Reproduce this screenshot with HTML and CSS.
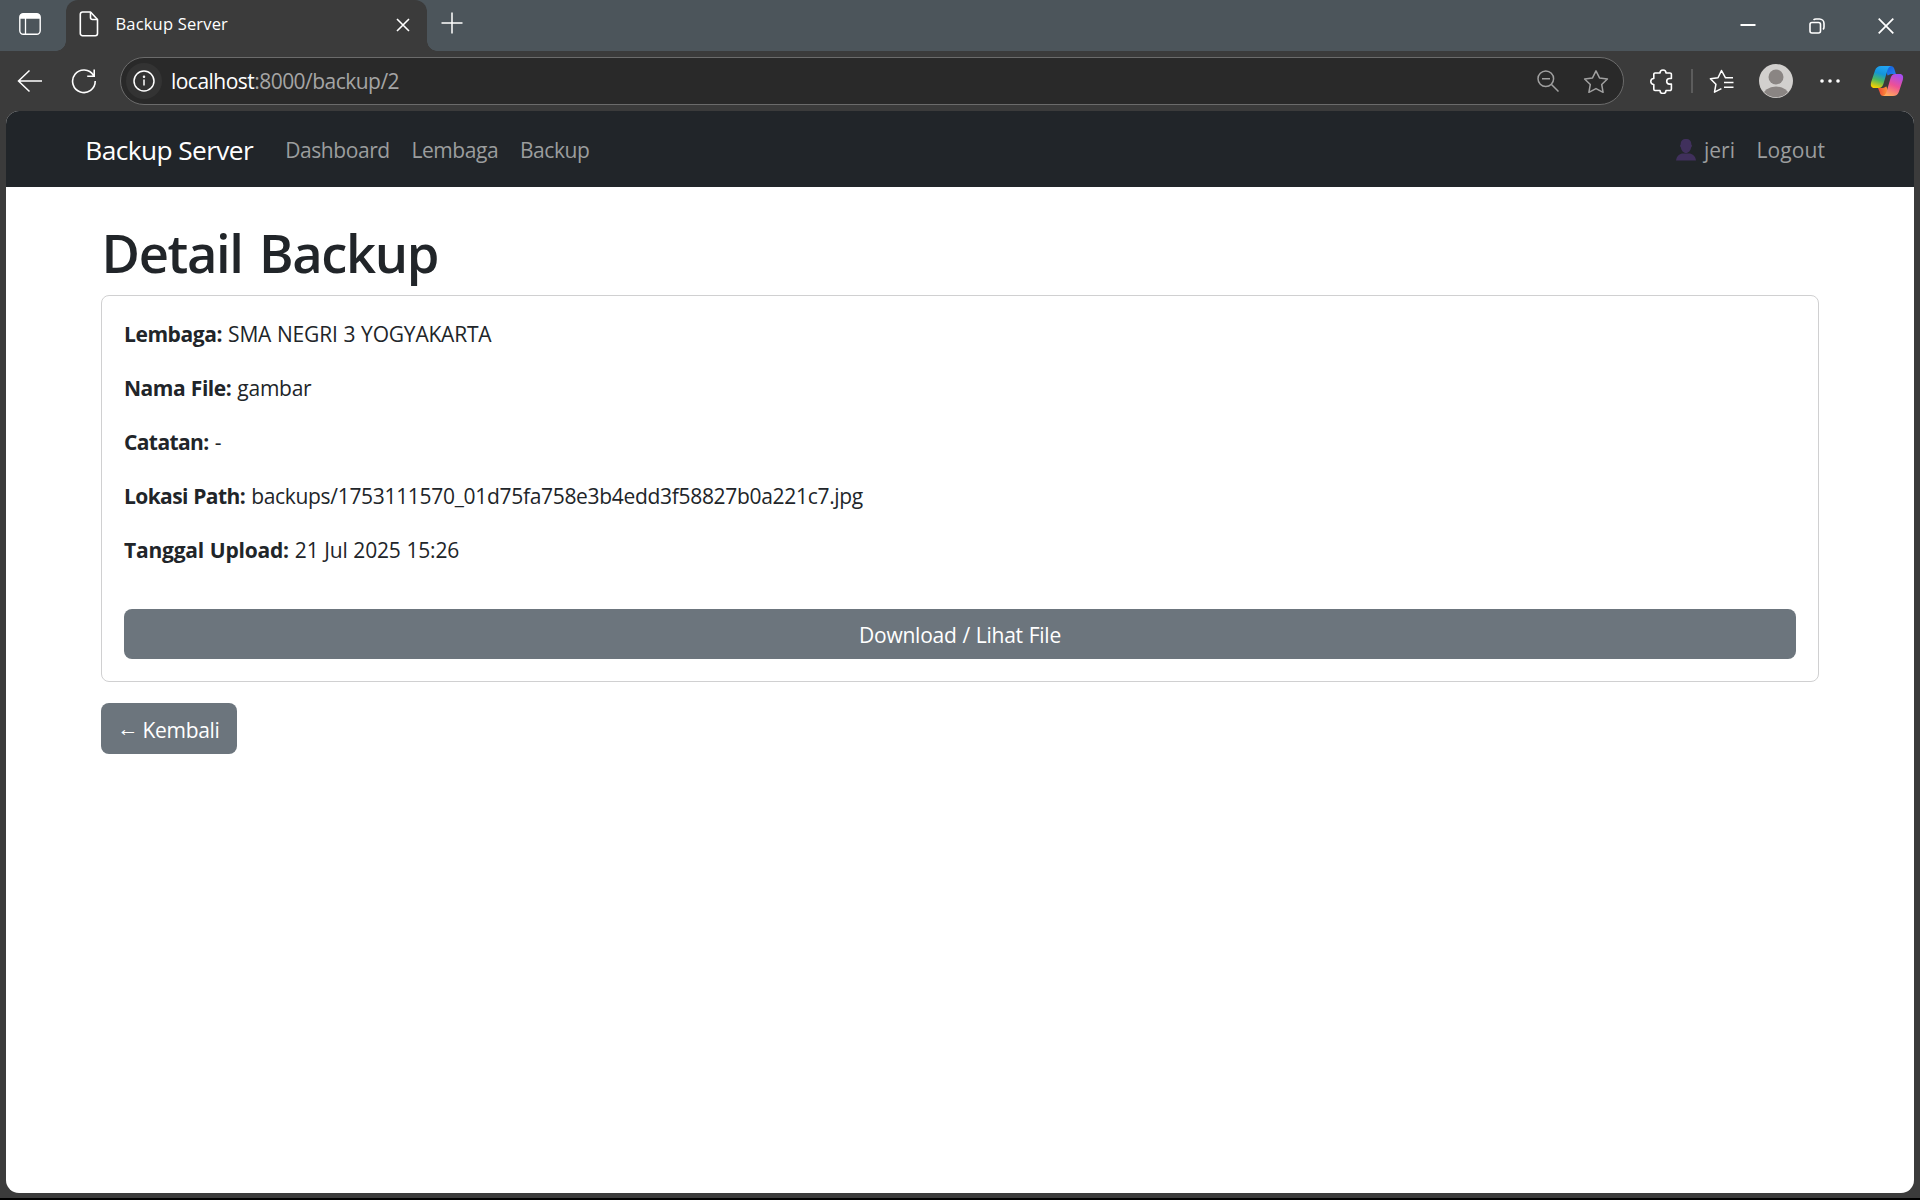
FILE: index.html
```html
<!DOCTYPE html>
<html lang="id">
<head>
<meta charset="utf-8">
<title>Backup Server</title>
<link rel="stylesheet" href="styles.css">
</head>
<body>
<div class="browser">
  <header class="tabstrip">
    <div class="tab-actions">
      <svg width="22" height="22" viewBox="0 0 22 22"><rect x=".8" y=".8" width="20.4" height="20.4" rx="3.5" fill="none" stroke="#fff" stroke-width="1.4"/><path d="M.8 5.800V4a3.200 3.200 0 0 1 3.200-3.200h14A3.200 3.200 0 0 1 21.200 4v1.800z" fill="#fff"/><path d="M6.500 5v16" stroke="#fff" stroke-width="1.300"/></svg>
    </div>
    <div class="tab">
      <svg class="tab-file" width="20" height="26" viewBox="0 0 20 26" fill="none" stroke="#fff" stroke-width="1.600" stroke-linejoin="round"><path d="M3.500 1h8L18.500 8.500V22.500a2.200 2.200 0 0 1-2.200 2.200H3.500a2.200 2.200 0 0 1-2.200-2.200V3.200A2.200 2.200 0 0 1 3.500 1z"/><path d="M11.500 1v5.500a2 2 0 0 0 2 2h5"/></svg>
      <span class="tab-title">Backup Server</span>
      <svg class="tab-close" width="14" height="14" viewBox="0 0 14 14" stroke="#fff" stroke-width="1.600"><path d="M1 1l12 12M13 1L1 13"/></svg>
    </div>
    <svg class="new-tab" width="22" height="22" viewBox="0 0 22 22" stroke="#fff" stroke-width="1.500"><path d="M11 .5v21M.5 11h21"/></svg>
    <div class="window-controls">
      <svg width="16" height="16" viewBox="0 0 16 16"><path d="M.5 7h15" stroke="#fff" stroke-width="2"/></svg>
      <svg width="16" height="16" viewBox="0 0 16 16" fill="none" stroke="#fff" stroke-width="1.600"><rect x="1" y="4.500" width="10.500" height="10.500" rx="2"/><path d="M4.500 1.800C5.200 1.200 6 1 7 1h3.500A4.500 4.500 0 0 1 15 5.500V9c0 1-.3 1.800-.9 2.500"/></svg>
      <svg width="16" height="16" viewBox="0 0 16 16" stroke="#fff" stroke-width="1.700"><path d="M.7.700l14.600 14.600M15.300.700L.7 15.300"/></svg>
    </div>
  </header>

  <div class="toolbar">
    <svg class="back" width="26" height="24" viewBox="0 0 26 24" fill="none" stroke="#fff" stroke-width="1.500"><path d="M25 12H1.500M12.500 1.500L1.500 12l11 10.500"/></svg>
    <svg class="reload" width="26" height="26" viewBox="0 0 26 26" fill="none" stroke="#fff" stroke-width="1.600"><path d="M24.200 13A11.300 11.300 0 1 1 22.500 7.300M23.200 1.500v6.700h-7"/></svg>
    <div class="address">
      <span class="site-info"><svg width="22" height="22" viewBox="0 0 22 22" fill="none" stroke="#fff" stroke-width="1.500"><circle cx="11" cy="11" r="10"/><path d="M11 9.500v6"/><circle cx="11" cy="6.800" r=".5"/></svg></span>
      <span class="url"><b>localhost</b>:8000/backup/2</span>
      <svg class="zoom-out" width="22" height="22" viewBox="0 0 22 22" fill="none" stroke="#a0a0a0" stroke-width="1.500"><circle cx="8.800" cy="8.800" r="7.800"/><path d="M14.500 14.500l7 7M5 8.800h8"/></svg>
      <svg class="star" width="26" height="25" viewBox="0 0 26 25" fill="none" stroke="#a0a0a0" stroke-width="1.500" stroke-linejoin="round"><path d="M13 1.800l3.500 7.100 7.900 1.100-5.700 5.500 1.400 7.800L13 19.600l-7.100 3.700 1.400-7.800L1.600 10l7.900-1.100z"/></svg>
    </div>
    <svg class="extensions" width="24" height="25" viewBox="0 0 24 25" fill="none" stroke="#fff" stroke-width="1.600" stroke-linejoin="round"><path d="M5 4h5a3 3 0 0 1 6 0h4a1.400 1.400 0 0 1 1.400 1.400v4.100h-1.900a2.800 2.800 0 0 0 0 5.600h1.900v5a1.400 1.400 0 0 1-1.400 1.400H16a3 3 0 0 1-6 0H5a1.200 1.200 0 0 1-1.200-1.200v-4.800a3 3 0 0 1 0-6V5.200A1.200 1.200 0 0 1 5 4z"/></svg>
    <span class="divider"></span>
    <svg class="favorites" width="25" height="25" viewBox="0 0 25 25" fill="none" stroke="#fff" stroke-width="1.500" stroke-linejoin="round"><path d="M24 8.800h-7.500L12.500 1.500 9 8.800 1.400 9.800l5.500 5.500-1.400 7.900 6.900-3.500M15 13.500h9.500M15 18.200h9.500"/></svg>
    <svg class="avatar" width="34" height="34" viewBox="0 0 34 34"><defs><clipPath id="face"><circle cx="17" cy="17" r="16.200"/></clipPath></defs><circle cx="17" cy="17" r="17" fill="#d2d0ce"/><g clip-path="url(#face)" fill="#8a8583"><circle cx="17" cy="13" r="7.500"/><ellipse cx="17" cy="32" rx="13" ry="9.500"/></g></svg>
    <svg class="more" width="20" height="4" viewBox="0 0 20 4" fill="#fff"><circle cx="2" cy="2" r="1.800"/><circle cx="10" cy="2" r="1.800"/><circle cx="18" cy="2" r="1.800"/></svg>
    <svg class="copilot" width="34" height="32" viewBox="0 0 34 32">
      <defs>
        <linearGradient id="cl" x1=".6" y1="0" x2=".3" y2="1"><stop offset="0" stop-color="#22a4f4"/><stop offset=".35" stop-color="#1495d8"/><stop offset=".65" stop-color="#4cb860"/><stop offset="1" stop-color="#f8d000"/></linearGradient>
        <linearGradient id="cr" x1=".7" y1="0" x2=".3" y2="1"><stop offset="0" stop-color="#a64df0"/><stop offset=".5" stop-color="#ee5096"/><stop offset="1" stop-color="#ffab5c"/></linearGradient>
        <linearGradient id="ct" x1="0" y1="0" x2="1" y2="1"><stop offset="0" stop-color="#1458d8"/><stop offset="1" stop-color="#2586f0"/></linearGradient>
        <linearGradient id="cb" x1="1" y1="0" x2="0" y2="0"><stop offset="0" stop-color="#ffa43a"/><stop offset="1" stop-color="#ee4436"/></linearGradient>
      </defs>
      <path d="M15 1h5.500c2.500 0 3.500 1.500 4.200 4l1.200 4H23c-2.500 0-4 .5-5 2l-1-2z" fill="url(#ct)"/>
      <path d="M19 31h-5.500c-2.500 0-3.200-1.500-3.900-4L8 23h3c2.500 0 4-.5 5-2l1 2z" fill="url(#cb)"/>
      <path d="M11 1h10c-2 .5-3 2.500-3.800 5l-3.500 12c-1 3.500-2.200 5-5.200 5h-4C1 23 .3 20.500 1.200 17L5 5.500C6 2.500 8 1 11 1z" fill="url(#cl)"/>
      <path d="M23 31H13c2-.5 3-2.500 3.800-5L20.300 14c1-3.500 2.200-5 5.200-5h4c3.500 0 4.200 2.500 3.300 6L29 26.500c-1 3-3 4.500-6 4.500z" fill="url(#cr)"/>
      <path d="M17.500 11c1-.8 2-1.200 3.500-1.500-1 1-1.500 2.500-2 4L16.500 21c-1 .8-2 1.200-3.500 1.500 1-1 1.500-2.500 2-4z" fill="#3b3b3b"/>
    </svg>
  </div>

  <div class="page">
    <nav class="navbar">
      <a class="brand">Backup Server</a>
      <a class="nav-link">Dashboard</a>
      <a class="nav-link">Lembaga</a>
      <a class="nav-link">Backup</a>
      <span class="spacer"></span>
      <svg class="user-icon" width="20" height="22" viewBox="0 0 20 22" fill="#40305c"><path d="M10 0C6.500 0 4.500 2 4.700 5.500c-1 .2-.7 2.500.2 3C5.300 11.500 7.500 14 10 14s4.700-2.500 5.100-5.500c.9-.5 1.200-2.800.2-3C15.500 2 13.500 0 10 0z"/><path d="M0 21.500c.5-4.500 4-7 7-7h6c3 0 6.500 2.500 7 7z"/></svg>
      <a class="nav-link user">jeri</a>
      <a class="nav-link logout">Logout</a>
    </nav>
    <main class="container">
      <h1>Detail Backup</h1>
      <section class="card">
        <p><strong class="label-lembaga">Lembaga:</strong> <span class="value-lembaga">SMA NEGRI 3 YOGYAKARTA</span></p>
        <p><strong class="label-file">Nama File:</strong> <span class="value-file">gambar</span></p>
        <p><strong class="label-note">Catatan:</strong> <span>-</span></p>
        <p><strong class="label-path">Lokasi Path:</strong> <span class="value-path">backups/1753111570_01d75fa758e3b4edd3f58827b0a221c7.jpg</span></p>
        <p><strong class="label-date">Tanggal Upload:</strong> <span class="value-date">21 Jul 2025 15:26</span></p>
        <a class="btn download">Download / Lihat File</a>
      </section>
      <a class="btn back-link"><span class="arrow">←</span>Kembali</a>
    </main>
  </div>
</div>
</body>
</html>
```
FILE: styles.css
```css
* { box-sizing: border-box; }
body { margin: 0; background: #000; font-family: "Open Sans", "Noto Sans", sans-serif; }
svg { display: block; flex: none; }

.browser { width: 1920px; height: 1198px; background: #3b3b3b; display: flex; flex-direction: column; }
.tabstrip { height: 51px; flex: none; display: flex; background: #4c555b; }
.tab-actions { width: 66px; padding: 13px 0 0 19px; }
.tab { width: 361px; height: 51px; background: #3b3b3b; border-radius: 12px 12px 0 0; display: flex; align-items: center; padding: 0 17px 3px 13px; position: relative; }
.tab::before, .tab::after { content: ""; position: absolute; bottom: 0; width: 10px; height: 10px; }
.tab::before { left: -10px; background: radial-gradient(circle at 0 0, #4c555b 9.500px, #3b3b3b 10px); }
.tab::after { right: -10px; background: radial-gradient(circle at 100% 0, #4c555b 9.500px, #3b3b3b 10px); }
.tab-title { margin-left: 16.500px; padding-bottom: 2px; flex: 1; color: #fff; font-size: 16.500px; letter-spacing: .18px; white-space: nowrap; }
.tab-close { margin-top: 2px; }
.new-tab { margin: 12px 0 0 14px; }
.window-controls { margin: 18px 26.500px 0 auto; display: flex; gap: 53px; }

.toolbar { height: 60px; flex: none; display: flex; align-items: center; padding-left: 17px; }
.reload { margin-left: 28px; }
.address { margin-left: 23px; width: 1504px; height: 48px; border: 1.500px solid #6b6b6b; border-radius: 24px; background: #292929; display: flex; align-items: center; padding-left: 5px; }
.site-info { width: 36px; height: 36px; border-radius: 50%; background: #333; display: flex; align-items: center; justify-content: center; }
.url { margin-left: 9px; flex: 1; font-size: 21px; letter-spacing: -.53px; color: #a5a5a5; white-space: nowrap; }
.url b { font-weight: 400; color: #fff; }
.zoom-out { margin-right: 24px; }
.star { margin-right: 14px; }
.extensions { margin-left: 26px; }
.divider { width: 2px; height: 24px; background: #5c5c5c; margin-left: 17px; }
.favorites { margin-left: 16px; }
.avatar { margin-left: 25px; }
.more { margin-left: 27px; }
.copilot { margin-left: 30px; }

.page { width: 1908px; height: 1082px; margin-left: 6px; background: #fff; border-radius: 13px; overflow: hidden; }
.navbar { height: 76px; background: #212529; display: flex; align-items: center; padding: 1px 89px 0 79.300px; }
.brand { color: #fff; font-size: 26.300px; letter-spacing: -.6px; margin-right: 32px; }
.nav-link { color: #9b9d9e; font-size: 21px; letter-spacing: -.42px; margin-right: 21.700px; }
.spacer { flex: 1; }
.user-icon { margin-right: 8.500px; }
.user { letter-spacing: 0; margin-right: 21.500px; }
.logout { letter-spacing: .08px; margin-right: 0; }
.container { padding: 33px 95px 0; color: #212529; }
h1 { margin: 0 0 10px .5px; font-size: 52.500px; font-weight: 600; line-height: 65px; letter-spacing: -1.350px; word-spacing: 4px; }
.card { height: 387px; border: 1px solid #d0d0d1; border-radius: 8px; padding: 21.500px 22px 0; }
.card p { margin: 0 0 21.600px; font-size: 21px; line-height: 32.400px; word-spacing: .6px; }
.card strong { font-weight: 700; }
.label-lembaga { letter-spacing: -.426px; }
.value-lembaga { letter-spacing: -.2px; }
.label-file { letter-spacing: -.46px; }
.value-file { letter-spacing: -.25px; }
.label-note { letter-spacing: -.6px; }
.label-path { letter-spacing: -.6px; }
.value-path { letter-spacing: -.31px; }
.label-date { letter-spacing: -.22px; }
.value-date { letter-spacing: -.2px; }
.btn { background: #6c757d; color: #fff; border-radius: 8px; height: 50px; font-size: 21px; display: flex; align-items: center; justify-content: center; }
.download { margin-top: 43px; padding-top: 2px; letter-spacing: -.23px; word-spacing: .6px; }
.back-link { width: 136px; height: 51px; margin-top: 21px; padding-top: 2px; letter-spacing: -.3px; }
.arrow { width: 25px; margin: -2px 0 0 -1px; font: 21px/22px "Liberation Sans", sans-serif; }
```
